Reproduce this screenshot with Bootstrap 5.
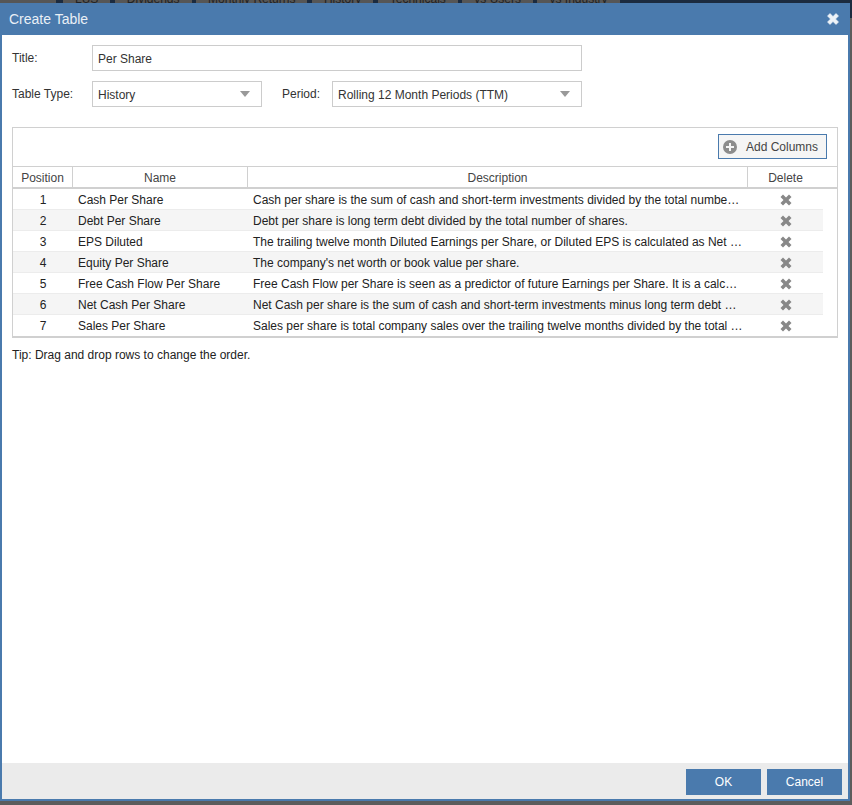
<!DOCTYPE html>
<html lang="en">
<head>
<meta charset="utf-8">
<title>Create Table</title>
<link href="https://cdn.jsdelivr.net/npm/bootstrap@5.3.0/dist/css/bootstrap.min.css" rel="stylesheet">
<style>
html,body{height:805px;overflow:hidden}
body{margin:0;background:#5c5c5c;font-family:"Liberation Sans",Arial,sans-serif;font-size:12px;color:#222;position:relative}
body::after{content:"";position:absolute;left:850px;top:0;width:2px;height:18px;background:#1c2b3f}
.tabstrip{height:3px;overflow:hidden;background:#1c2b3f;display:flex;color:#222;font-size:12px;line-height:14px}
.tabstrip span{background:#565656;margin-top:-8px;padding:0 12px;margin-right:4.500px;white-space:nowrap;text-align:center}
.tabstrip span:first-child{margin-right:7px;padding:0;width:56px}
.dlg{width:850px;height:798px;border:solid #4a7aad;border-width:0 2px 2px;border-radius:0;background:#fff;display:flex;flex-direction:column}
.dlg-head{height:32px;margin:0 -2px;padding:0 11px 0 9px;background:#4a7aad;color:#e9eff6;font-size:14px;border:0;border-radius:0}
.dlg-body{padding:10px 10px 0;flex:1 1 auto}
.field-row{display:flex;align-items:center;height:26px}
.field-row+.field-row{margin-top:10px}
.lbl{width:80px;flex:none;color:#333}
.lbl-period{width:50px;margin-left:20px;flex:none;color:#333}
.fld{height:26px;min-height:26px;border:1px solid #ccc;border-radius:0;font-size:12px;padding:1px 5px 0;color:#333;box-shadow:none}
.fld-title{width:490px}
.fld-type{width:170px}
.fld-period{width:250px}
.form-select.fld{background-image:url("data:image/svg+xml,%3Csvg xmlns='http://www.w3.org/2000/svg' width='10' height='6'%3E%3Cpath d='M0 0h10L5 6z' fill='%23999'/%3E%3C/svg%3E");background-size:10px 6px;background-position:right 11px center;padding-right:24px}
.grid-box{margin-top:20px;border:1px solid #d0d0d0;border-bottom-width:2px}
.grid-bar{height:38px;padding:6px 10px 0 0;display:flex;justify-content:flex-end}
.add-btn{width:109px;height:25px;border:1px solid #4a7aad;border-radius:0;background:#f5f5f5;color:#444;font-size:12px;display:flex;align-items:center;gap:9px;padding:0 0 0 4px}
.add-btn:hover{background:#f5f5f5;color:#444;border-color:#4a7aad}
.grid-tbl{table-layout:fixed;width:100%;margin:0;border-collapse:separate;border-spacing:0;font-size:12px}
.grid-tbl td,.grid-tbl th{padding:0 5px;white-space:nowrap;overflow:hidden;text-overflow:ellipsis;box-shadow:none;border:0;background:transparent}
.head-wrap{border-top:1px solid #d0d0d0;border-bottom:2px solid #d0d0d0}
.grid-tbl th{height:20px;font-weight:400;text-align:center;color:#444;border-right:1px solid #d0d0d0}
.grid-tbl th:last-child{border-right:0;padding-right:19px}
.body-wrap{padding-right:14px}
.grid-tbl td{height:21px;color:#222;border-bottom:1px solid #ececec;vertical-align:middle;padding-top:1px}
.grid-tbl tr:last-child td{border-bottom:0}
.grid-tbl tr:nth-child(even) td{background:#f5f5f5}
.col-pos{width:60px}.col-name{width:175px}.col-desc{width:500px}
.grid-tbl td.ctr{text-align:center}
.del-x{display:block;margin:0 auto}
.tip{margin-top:10px;color:#222;line-height:14px}
.dlg-foot{height:36px;margin:0;padding:6px 6px 4px 0;background:#ebebeb;border:0;border-radius:0;display:flex;justify-content:flex-end;gap:6px;flex:none;align-items:flex-start}
.foot-btn{width:75px;height:26px;padding:0;margin:0;border:0;border-radius:0;background:#4a7aad;color:#fff;font-size:12px}
.foot-btn:hover{background:#4a7aad;color:#fff}
</style>
</head>
<body>
<div class="tabstrip">
  <span></span>
  <span>LUS</span><span>Dividends</span><span>Monthly Returns</span><span>History</span><span>Technicals</span><span>vs Users</span><span>vs Industry</span>
</div>
<div class="dlg">
  <div class="dlg-head d-flex align-items-center justify-content-between">
    <span>Create Table</span>
    <svg width="12" height="12" viewBox="0 0 12 12" aria-label="Close"><path d="M3 .5 6 3.500 9 .5 11.500 3 8.500 6 11.500 9 9 11.500 6 8.500 3 11.500 .5 9 3.500 6 .5 3z" fill="#eef3f8" stroke="#eef3f8" stroke-width=".6" stroke-linejoin="round"/></svg>
  </div>
  <div class="dlg-body">
    <div class="field-row">
      <label class="lbl" for="t">Title:</label>
      <input id="t" class="form-control fld fld-title" value="Per Share">
    </div>
    <div class="field-row">
      <label class="lbl" for="ty">Table Type:</label>
      <select id="ty" class="form-select fld fld-type"><option>History</option></select>
      <label class="lbl-period" for="p">Period:</label>
      <select id="p" class="form-select fld fld-period"><option>Rolling 12 Month Periods (TTM)</option></select>
    </div>
    <div class="grid-box">
      <div class="grid-bar">
        <button type="button" class="btn add-btn">
          <svg width="14" height="14" viewBox="0 0 14 14"><circle cx="7" cy="7" r="7" fill="#8c8c8c"/><path d="M6 3h2v3h3v2H8v3H6V8H3V6h3z" fill="#f5f5f5"/></svg>
          <span>Add Columns</span>
        </button>
      </div>
      <div class="head-wrap">
        <table class="table grid-tbl">
          <colgroup><col class="col-pos"><col class="col-name"><col class="col-desc"><col></colgroup>
          <thead><tr><th>Position</th><th>Name</th><th>Description</th><th>Delete</th></tr></thead>
        </table>
      </div>
      <div class="body-wrap">
        <table class="table grid-tbl">
          <colgroup><col class="col-pos"><col class="col-name"><col class="col-desc"><col></colgroup>
          <tbody>
            <tr><td class="ctr">1</td><td>Cash Per Share</td><td>Cash per share is the sum of cash and short-term investments divided by the total number of shares.</td><td><svg class="del-x" width="12" height="12" viewBox="0 0 12 12"><path d="M3 .5 6 3.500 9 .5 11.500 3 8.500 6 11.500 9 9 11.500 6 8.500 3 11.500 .5 9 3.500 6 .5 3z" fill="#888"/></svg></td></tr>
            <tr><td class="ctr">2</td><td>Debt Per Share</td><td>Debt per share is long term debt divided by the total number of shares.</td><td><svg class="del-x" width="12" height="12" viewBox="0 0 12 12"><path d="M3 .5 6 3.500 9 .5 11.500 3 8.500 6 11.500 9 9 11.500 6 8.500 3 11.500 .5 9 3.500 6 .5 3z" fill="#888"/></svg></td></tr>
            <tr><td class="ctr">3</td><td>EPS Diluted</td><td>The trailing twelve month Diluted Earnings per Share, or Diluted EPS is calculated as Net Income divided by shares.</td><td><svg class="del-x" width="12" height="12" viewBox="0 0 12 12"><path d="M3 .5 6 3.500 9 .5 11.500 3 8.500 6 11.500 9 9 11.500 6 8.500 3 11.500 .5 9 3.500 6 .5 3z" fill="#888"/></svg></td></tr>
            <tr><td class="ctr">4</td><td>Equity Per Share</td><td>The company's net worth or book value per share.</td><td><svg class="del-x" width="12" height="12" viewBox="0 0 12 12"><path d="M3 .5 6 3.500 9 .5 11.500 3 8.500 6 11.500 9 9 11.500 6 8.500 3 11.500 .5 9 3.500 6 .5 3z" fill="#888"/></svg></td></tr>
            <tr><td class="ctr">5</td><td>Free Cash Flow Per Share</td><td>Free Cash Flow per Share is seen as a predictor of future Earnings per Share. It is a calculated measure.</td><td><svg class="del-x" width="12" height="12" viewBox="0 0 12 12"><path d="M3 .5 6 3.500 9 .5 11.500 3 8.500 6 11.500 9 9 11.500 6 8.500 3 11.500 .5 9 3.500 6 .5 3z" fill="#888"/></svg></td></tr>
            <tr><td class="ctr">6</td><td>Net Cash Per Share</td><td>Net Cash per share is the sum of cash and short-term investments minus long term debt divided by shares.</td><td><svg class="del-x" width="12" height="12" viewBox="0 0 12 12"><path d="M3 .5 6 3.500 9 .5 11.500 3 8.500 6 11.500 9 9 11.500 6 8.500 3 11.500 .5 9 3.500 6 .5 3z" fill="#888"/></svg></td></tr>
            <tr><td class="ctr">7</td><td>Sales Per Share</td><td>Sales per share is total company sales over the trailing twelve months divided by the total number of shares.</td><td><svg class="del-x" width="12" height="12" viewBox="0 0 12 12"><path d="M3 .5 6 3.500 9 .5 11.500 3 8.500 6 11.500 9 9 11.500 6 8.500 3 11.500 .5 9 3.500 6 .5 3z" fill="#888"/></svg></td></tr>
          </tbody>
        </table>
      </div>
    </div>
    <p class="tip">Tip: Drag and drop rows to change the order.</p>
  </div>
  <div class="dlg-foot">
    <button type="button" class="btn foot-btn">OK</button>
    <button type="button" class="btn foot-btn">Cancel</button>
  </div>
</div>
<script src="https://cdn.jsdelivr.net/npm/bootstrap@5.3.0/dist/js/bootstrap.bundle.min.js"></script>
</body>
</html>
